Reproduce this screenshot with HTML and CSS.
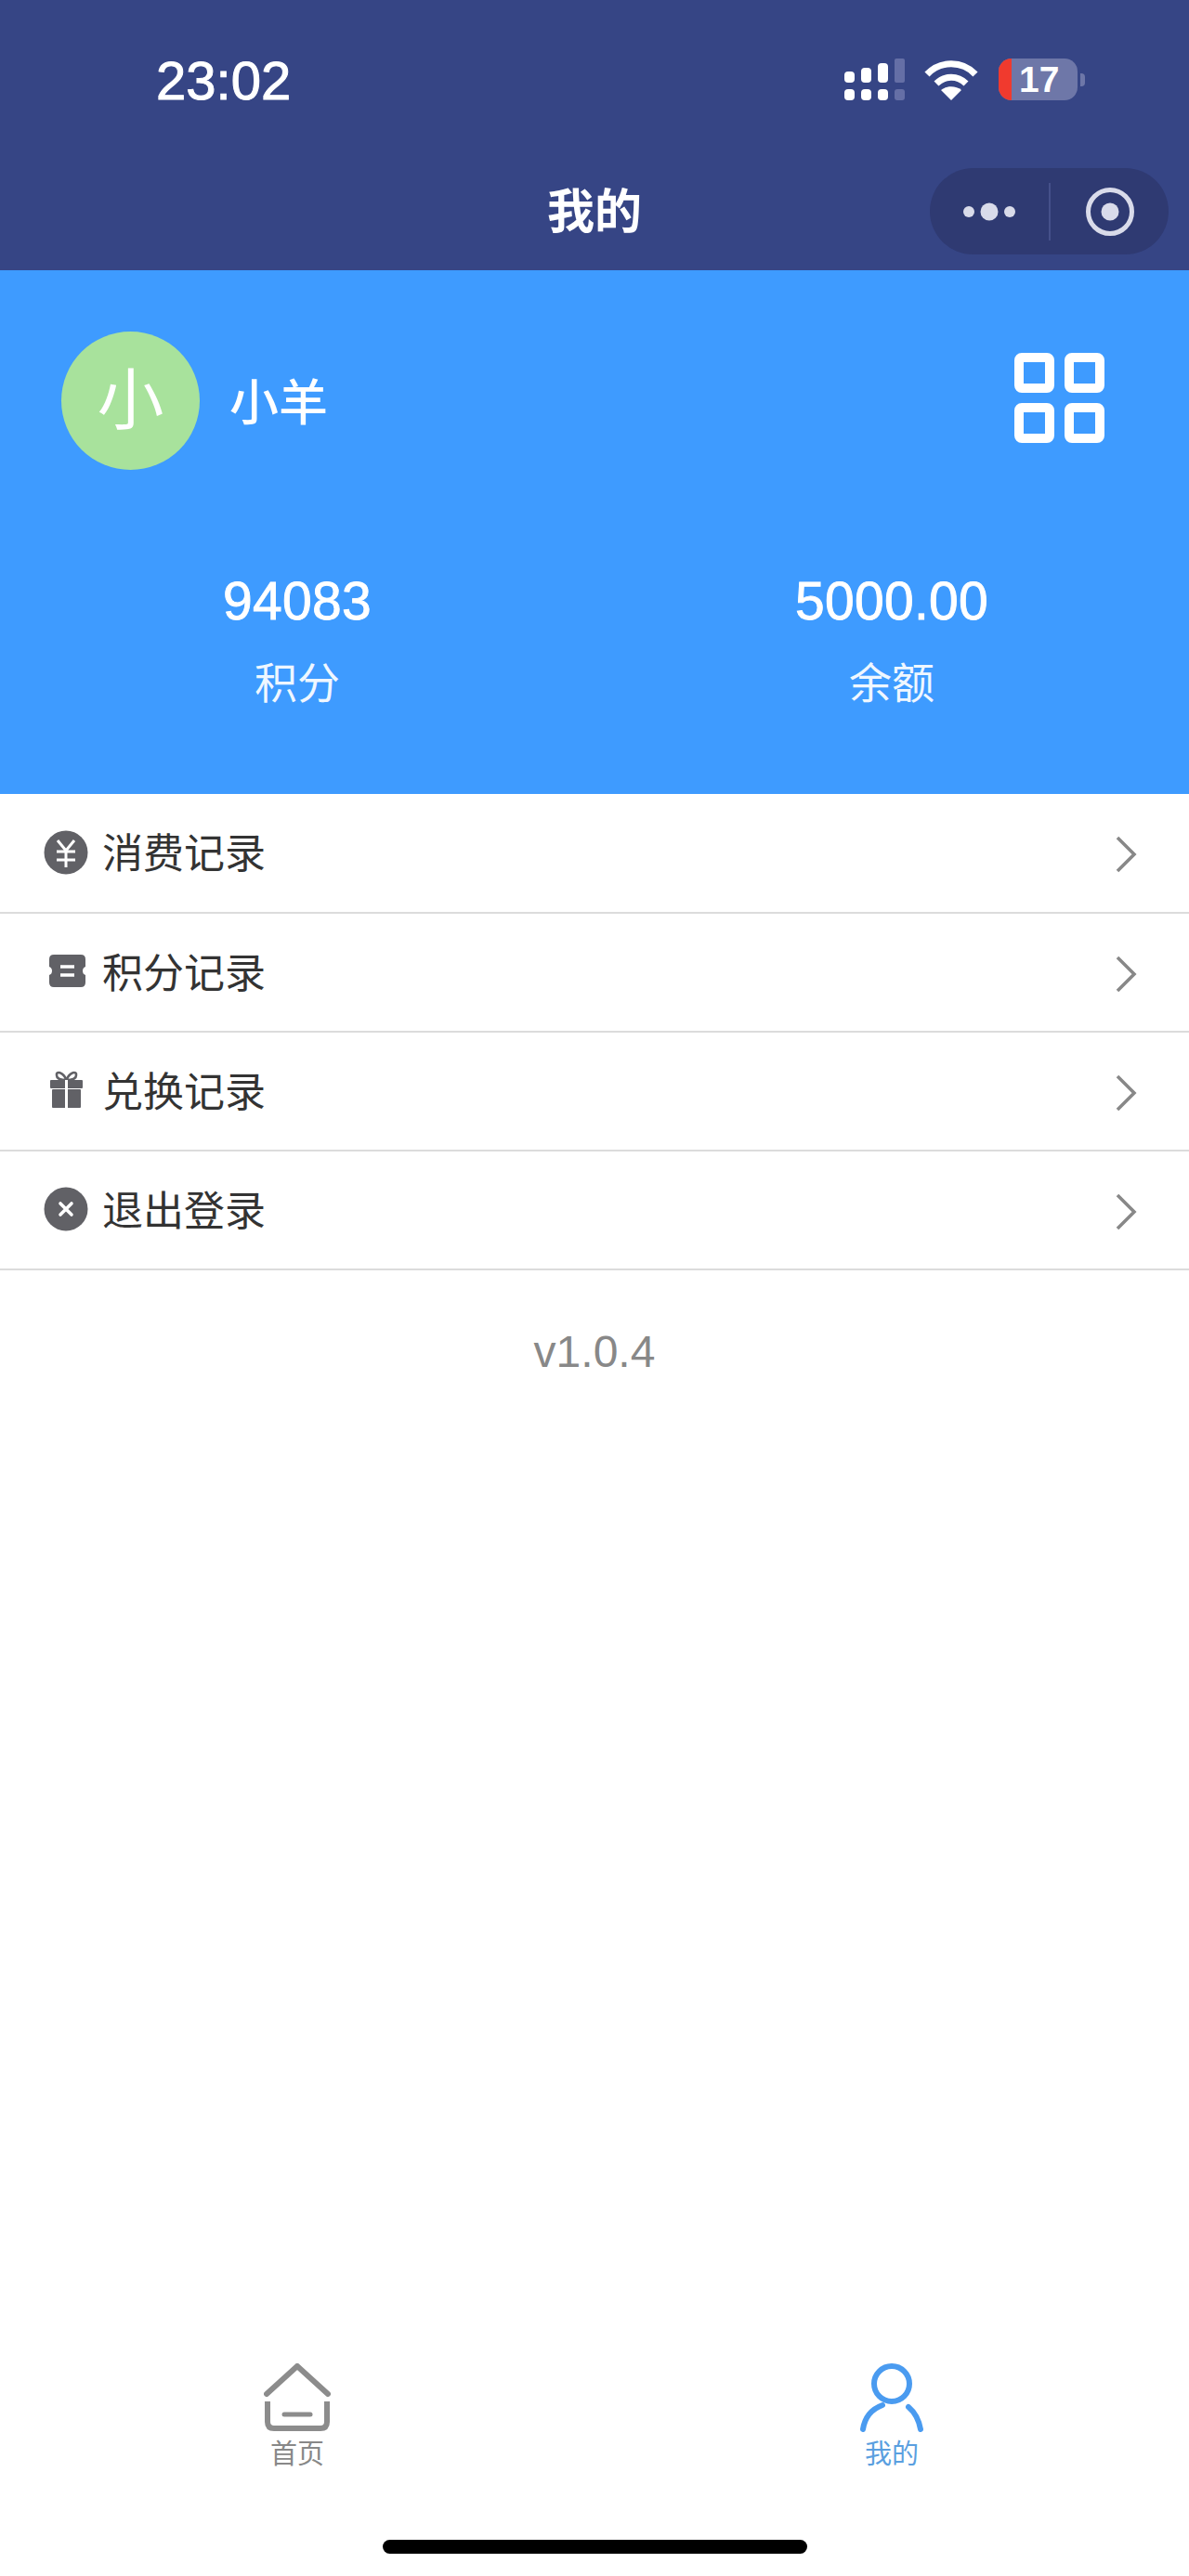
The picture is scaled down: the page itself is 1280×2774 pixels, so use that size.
FILE: index.html
```html
<!DOCTYPE html>
<html>
<head>
  <meta charset="utf-8">
  <meta name="viewport" content="width=device-width, initial-scale=1">
  <title>我的</title>
  <link rel="stylesheet" href="styles.css">
</head>
<body>
  <div class="page">
    <!-- status bar and mini program title -->
    <header class="nav">
      <div class="status">
        <span class="time">23:02</span>
        <div class="status-icons">
          <svg class="signal" width="66" height="45" viewBox="0 0 66 45">
            <g fill="#fff">
              <rect x="0" y="14" width="11" height="12" rx="4"/>
              <rect x="18" y="10" width="11" height="16" rx="4"/>
              <rect x="36" y="5" width="11" height="21" rx="4"/>
              <rect x="0" y="33" width="11" height="12" rx="4"/>
              <rect x="18" y="33" width="11" height="12" rx="4"/>
              <rect x="36" y="33" width="11" height="12" rx="4"/>
            </g>
            <g fill="#656fa6">
              <rect x="54" y="0" width="11" height="26" rx="2"/>
              <rect x="54" y="33" width="11" height="12" rx="3"/>
            </g>
          </svg>
          <svg class="wifi" width="58" height="44" viewBox="0 0 58 44">
            <g fill="none" stroke="#fff" stroke-width="7">
              <path d="M3 16 C17 1 41 1 55 16"/>
              <path d="M13 26 C22 17 36 17 45 26"/>
            </g>
            <path d="M18 33 C24 28 34 28 40 33 L29 44 Z" fill="#fff"/>
          </svg>
          <div class="battery">
            <div class="battery-body">
              <span class="battery-low"></span>
              <span class="battery-num">17</span>
            </div>
            <span class="battery-nub"></span>
          </div>
        </div>
      </div>
      <div class="title-row">
        <h1 class="title">我的</h1>
        <div class="capsule">
          <svg class="capsule-more" width="58" height="24" viewBox="0 0 58 24">
            <g fill="#d9dbea">
              <circle cx="6" cy="12" r="6"/>
              <circle cx="28" cy="12" r="9.5"/>
              <circle cx="50" cy="12" r="6"/>
            </g>
          </svg>
          <span class="capsule-line"></span>
          <svg class="capsule-close" width="54" height="54" viewBox="0 0 54 54">
            <circle cx="27" cy="27" r="23.5" fill="none" stroke="#d9dbea" stroke-width="5"/>
            <circle cx="27" cy="27" r="9.5" fill="#d9dbea"/>
          </svg>
        </div>
      </div>
    </header>

    <section class="profile">
      <div class="user">
        <div class="avatar">小</div>
        <div class="name">小羊</div>
        <svg class="qr" width="97" height="97" viewBox="0 0 97 97">
          <g fill="none" stroke="#fff" stroke-width="10">
            <rect x="5" y="5" width="33" height="33" rx="3"/>
            <rect x="59" y="5" width="33" height="33" rx="3"/>
            <rect x="5" y="59" width="33" height="33" rx="3"/>
            <rect x="59" y="59" width="33" height="33" rx="3"/>
          </g>
        </svg>
      </div>
      <div class="stats">
        <div class="stat">
          <div class="stat-num">94083</div>
          <div class="stat-label">积分</div>
        </div>
        <div class="stat">
          <div class="stat-num">5000.00</div>
          <div class="stat-label">余额</div>
        </div>
      </div>
    </section>

    <ul class="menu">
      <li class="menu-item">
        <svg class="menu-icon" width="48" height="48" viewBox="0 0 48 48">
          <circle cx="24" cy="24" r="23.5" fill="#616166"/>
          <path d="M15 11 L24 22 L33 11 M14 23 H34 M14 32 H34 M24 22 V40" fill="none" stroke="#fff" stroke-width="3"/>
        </svg>
        <span class="menu-text">消费记录</span>
        <svg class="chevron" width="24" height="40" viewBox="0 0 24 40">
          <path d="M3 2 L21 20 L3 38" fill="none" stroke="#888" stroke-width="3.6"/>
        </svg>
      </li>
      <li class="menu-item">
        <svg class="menu-icon" width="48" height="48" viewBox="0 0 48 48">
          <path d="M11 6 H40 Q45 6 45 11 V19 Q42 20 42 23.5 Q42 27 45 28 V36 Q45 41 40 41 H11 Q6 41 6 36 V28 Q9 27 9 23.5 Q9 20 6 19 V11 Q6 6 11 6 Z" fill="#616166"/>
          <path d="M18 19 H33 M18 28 H33" stroke="#fff" stroke-width="3.5"/>
        </svg>
        <span class="menu-text">积分记录</span>
        <svg class="chevron" width="24" height="40" viewBox="0 0 24 40">
          <path d="M3 2 L21 20 L3 38" fill="none" stroke="#888" stroke-width="3.6"/>
        </svg>
      </li>
      <li class="menu-item">
        <svg class="menu-icon" width="48" height="48" viewBox="0 0 48 48">
          <path d="M24.5 13 C21 4 13 3 14 8 C14 12 19 13 24.5 13 C30 13 35 12 35 8 C36 3 28 4 24.5 13 Z" fill="none" stroke="#616166" stroke-width="2.6"/>
          <rect x="7" y="13" width="35" height="9" rx="1" fill="#616166"/>
          <rect x="9" y="23" width="31" height="20" rx="1" fill="#616166"/>
          <rect x="23" y="13" width="3" height="30" fill="#fff"/>
        </svg>
        <span class="menu-text">兑换记录</span>
        <svg class="chevron" width="24" height="40" viewBox="0 0 24 40">
          <path d="M3 2 L21 20 L3 38" fill="none" stroke="#888" stroke-width="3.6"/>
        </svg>
      </li>
      <li class="menu-item">
        <svg class="menu-icon" width="48" height="48" viewBox="0 0 48 48">
          <circle cx="24" cy="24" r="23.5" fill="#616166"/>
          <path d="M18 18 L30 30 M30 18 L18 30" fill="none" stroke="#fff" stroke-width="3.6" stroke-linecap="round"/>
        </svg>
        <span class="menu-text">退出登录</span>
        <svg class="chevron" width="24" height="40" viewBox="0 0 24 40">
          <path d="M3 2 L21 20 L3 38" fill="none" stroke="#888" stroke-width="3.6"/>
        </svg>
      </li>
    </ul>

    <div class="version">v1.0.4</div>

    <nav class="tabbar">
      <div class="tab">
        <svg class="tab-icon" width="72" height="74" viewBox="0 0 72 74">
          <g fill="none" stroke="#8c8c8c" stroke-linecap="round">
            <path d="M3 33 L36 3 L69 33" stroke-width="6"/>
            <path d="M4 41 V63 Q4 70 11 70 H61 Q68 70 68 63 V41" stroke-width="6" stroke-linecap="butt"/>
            <path d="M22 55 H50" stroke-width="5"/>
          </g>
        </svg>
        <span class="tab-label">首页</span>
      </div>
      <div class="tab tab-active">
        <svg class="tab-icon" width="72" height="74" viewBox="0 0 72 74">
          <g fill="none" stroke="#4a9bf0" stroke-width="6" stroke-linecap="round">
            <circle cx="36" cy="22" r="19"/>
            <path d="M5 71 C7 58 15 49 26 45"/>
            <path d="M54 47 C60 52 65 60 67 71"/>
          </g>
        </svg>
        <span class="tab-label">我的</span>
      </div>
    </nav>

    <div class="home-bar"></div>
  </div>
</body>
</html>
```

FILE: styles.css
```css
* {
  box-sizing: border-box;
}

body {
  margin: 0;
  background: #fff;
  font-family: "Liberation Sans", "Noto Sans CJK SC", sans-serif;
}

.page {
  display: flex;
  flex-direction: column;
  height: 2774px;
  overflow: hidden;
}

.nav {
  height: 291px;
  padding-top: 63px;
  background: #364585;
  color: #fff;
}

.status {
  display: flex;
  justify-content: space-between;
  align-items: center;
  height: 45px;
  padding: 0 112px 0 168px;
}

.time {
  margin-top: 2px;
  font-size: 58px;
  line-height: 45px;
  -webkit-text-stroke: 1px #fff;
}

.status-icons {
  display: flex;
  align-items: center;
}

.wifi {
  margin-left: 20px;
}

.battery {
  display: flex;
  align-items: center;
  margin-left: 22px;
}

.battery-body {
  display: flex;
  width: 85px;
  height: 45px;
  border-radius: 14px;
  overflow: hidden;
  background: #6e77a8;
}

.battery-low {
  width: 14px;
  margin-right: 8px;
  background: #f03a2e;
}

.battery-num {
  font-size: 39px;
  font-weight: bold;
  line-height: 45px;
}

.battery-nub {
  width: 5px;
  height: 14px;
  margin-left: 3px;
  border-radius: 0 4px 4px 0;
  background: #6e77a8;
}

.title-row {
  display: grid;
  grid-template-columns: 1fr auto 1fr;
  align-items: center;
  height: 93px;
  margin-top: 72px;
  padding: 0 22px;
}

.title {
  grid-column: 2;
  margin: 2px 0 0;
  font-size: 51px;
  font-weight: 700;
  line-height: 93px;
}

.capsule {
  grid-column: 3;
  justify-self: end;
  display: flex;
  align-items: center;
  width: 257px;
  height: 93px;
  padding-left: 36px;
  border-radius: 47px;
  background: #2f3a72;
}

.capsule-line {
  width: 2px;
  height: 62px;
  margin-left: 34px;
  background: #45508a;
}

.capsule-close {
  margin-left: 37px;
}

.profile {
  height: 564px;
  padding-top: 66px;
  background: #3e9bff;
  color: #fff;
}

.user {
  display: flex;
  align-items: center;
  padding: 0 91px 0 66px;
}

.avatar {
  width: 149px;
  height: 149px;
  border-radius: 50%;
  background: #a8e29c;
  font-size: 72px;
  line-height: 149px;
  text-align: center;
}

.name {
  margin-left: 32px;
  margin-bottom: 3px;
  font-size: 53px;
  font-weight: 500;
}

.qr {
  margin-left: auto;
  margin-bottom: 6px;
}

.stats {
  display: grid;
  grid-template-columns: 1fr 1fr;
  margin-top: 109px;
  text-align: center;
}

.stat-num {
  font-size: 57px;
  letter-spacing: 0.3px;
  line-height: 64px;
  -webkit-text-stroke: 0.9px #fff;
}

.stat-label {
  margin-top: 27px;
  font-size: 46px;
  line-height: 60px;
  opacity: 0.92;
}

.menu {
  margin: 0;
  padding: 0;
  list-style: none;
}

.menu-item {
  display: flex;
  align-items: center;
  height: 128px;
  padding: 0 56px 0 47px;
  border-bottom: 2px solid #dcdcdc;
}

.menu-item:first-child {
  height: 129px;
}

.menu-icon {
  margin-bottom: 2px;
}

.menu-text {
  margin-left: 15px;
  margin-bottom: 5px;
  color: #333;
  font-size: 44px;
}

.chevron {
  margin-left: auto;
  margin-top: 3px;
}

.version {
  margin-top: 58px;
  color: #888;
  font-size: 48px;
  line-height: 60px;
  text-align: center;
}

.tabbar {
  display: grid;
  grid-template-columns: 1fr 1fr;
  margin-top: auto;
  padding-bottom: 74px;
}

.tab {
  display: flex;
  flex-direction: column;
  align-items: center;
  color: #888;
}

.tab-active {
  color: #5a9fe0;
}

.tab-label {
  margin-top: 6px;
  font-size: 29px;
  line-height: 36px;
}

.home-bar {
  align-self: center;
  width: 457px;
  height: 15px;
  margin-bottom: 24px;
  border-radius: 8px;
  background: #000;
}
```
